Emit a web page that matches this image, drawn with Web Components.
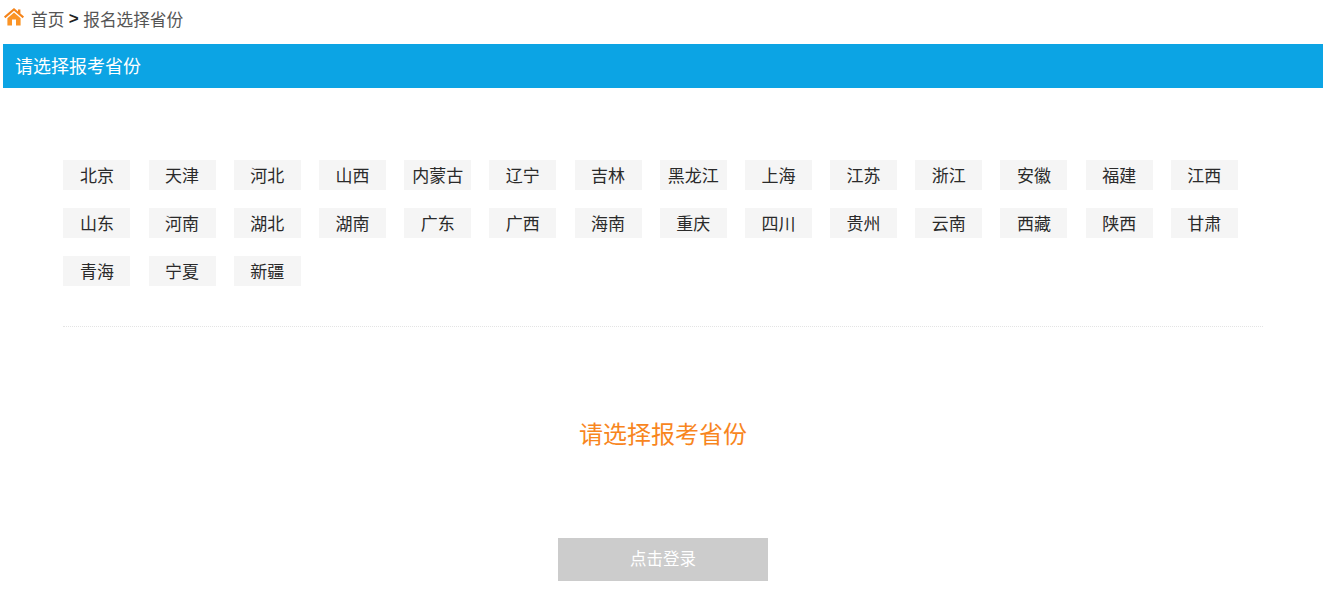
<!DOCTYPE html>
<html lang="zh-CN">
<head>
<meta charset="utf-8">
<title>报名选择省份</title>
<style>
  html, body { margin: 0; background: #fff; }
  body { font-family: "Noto Sans CJK SC", "Liberation Sans", sans-serif; }
</style>
</head>
<body>
<signup-page>
  <bread-crumb></bread-crumb>
  <title-bar>请选择报考省份</title-bar>
  <province-picker></province-picker>
  <province-hint>请选择报考省份</province-hint>
  <login-button>点击登录</login-button>
</signup-page>

<script>
class SignupPage extends HTMLElement {
  constructor() {
    super();
    this.attachShadow({ mode: "open" });
    this.shadowRoot.innerHTML = `
    <style>
      :host { display: flex; flex-direction: column; width: 1342px; height: 607px; overflow: hidden; }
    </style>
    <slot></slot>`;
  }
}

class BreadCrumb extends HTMLElement {
  constructor() {
    super();
    this.attachShadow({ mode: "open" });
    this.shadowRoot.innerHTML = `
    <style>
      :host { display: flex; align-items: center; height: 44px; padding: 0 0 6px 4px; box-sizing: border-box; font-size: 16.67px; color: #555; }
      svg { width: 20px; height: 18px; margin-right: 7px; margin-top: -4px; }
      .sep { color: #222; margin: 0 4.5px; font-family: "Liberation Sans", sans-serif; font-size: 17px; font-weight: bold; }
    </style>
    <svg viewBox="0 0 20 18">
      <path d="M10 0 L0 8.6 L1.3 10.2 L10 2.8 L18.7 10.2 L20 8.6 L16.4 5.5 V1.4 H14 V3.5 Z" fill="#f5841a"/>
      <path d="M3.4 10.2 L10 4.6 L16.6 10.2 V17.4 H12 V11.6 H8 V17.4 H3.4 Z" fill="#fb9426"/>
    </svg>
    <span>首页</span><span class="sep">&gt;</span><span>报名选择省份</span>`;
  }
}

class TitleBar extends HTMLElement {
  constructor() {
    super();
    this.attachShadow({ mode: "open" });
    this.shadowRoot.innerHTML = `
    <style>
      :host { display: flex; align-items: center; height: 44px; width: 1320px; margin-left: 3px; padding: 0 0 2px 12px; box-sizing: border-box; background: #0ca4e4; color: #fff; font-size: 18px; }
    </style>
    <slot></slot>`;
  }
}

class ProvinceChip extends HTMLElement {
  constructor() {
    super();
    this.attachShadow({ mode: "open" });
    this.shadowRoot.innerHTML = `
    <style>
      :host { display: flex; align-items: center; justify-content: center; width: 67px; height: 30px; padding-bottom: 2px; box-sizing: border-box; background: #f5f5f5; color: #2a2a2a; font-size: 17px; cursor: pointer; }
    </style>
    <slot></slot>`;
  }
}

const PROVINCES = ["北京","天津","河北","山西","内蒙古","辽宁","吉林","黑龙江","上海","江苏","浙江","安徽","福建","江西",
  "山东","河南","湖北","湖南","广东","广西","海南","重庆","四川","贵州","云南","西藏","陕西","甘肃",
  "青海","宁夏","新疆"];

class ProvincePicker extends HTMLElement {
  constructor() {
    super();
    this.attachShadow({ mode: "open" });
    this.shadowRoot.innerHTML = `
    <style>
      :host { display: block; width: 1200px; margin: 72px 0 0 63px; padding-bottom: 40px; border-bottom: 1px dotted #e4e4e4; }
      .grid { display: grid; grid-template-columns: repeat(14, 85.2px); grid-auto-rows: 30px; row-gap: 18px; margin-left: 0.4px; }
    </style>
    <div class="grid">
      ${PROVINCES.map(p => `<province-chip>${p}</province-chip>`).join("")}
    </div>`;
  }
}

class ProvinceHint extends HTMLElement {
  constructor() {
    super();
    this.attachShadow({ mode: "open" });
    this.shadowRoot.innerHTML = `
    <style>
      :host { display: flex; align-items: center; justify-content: center; height: 40px; width: 1326px; margin-top: 85px; font-size: 24px; color: #f8861e; }
    </style>
    <slot></slot>`;
  }
}

class LoginButton extends HTMLElement {
  constructor() {
    super();
    this.attachShadow({ mode: "open" });
    this.shadowRoot.innerHTML = `
    <style>
      :host { display: flex; align-items: center; justify-content: center; width: 210px; height: 43px; margin: 86px 0 0 558px; padding-bottom: 4px; box-sizing: border-box; background: #ccc; color: #fff; font-size: 16.5px; }
    </style>
    <slot></slot>`;
  }
}

customElements.define("signup-page", SignupPage);
customElements.define("bread-crumb", BreadCrumb);
customElements.define("title-bar", TitleBar);
customElements.define("province-chip", ProvinceChip);
customElements.define("province-picker", ProvincePicker);
customElements.define("province-hint", ProvinceHint);
customElements.define("login-button", LoginButton);
</script>
</body>
</html>
